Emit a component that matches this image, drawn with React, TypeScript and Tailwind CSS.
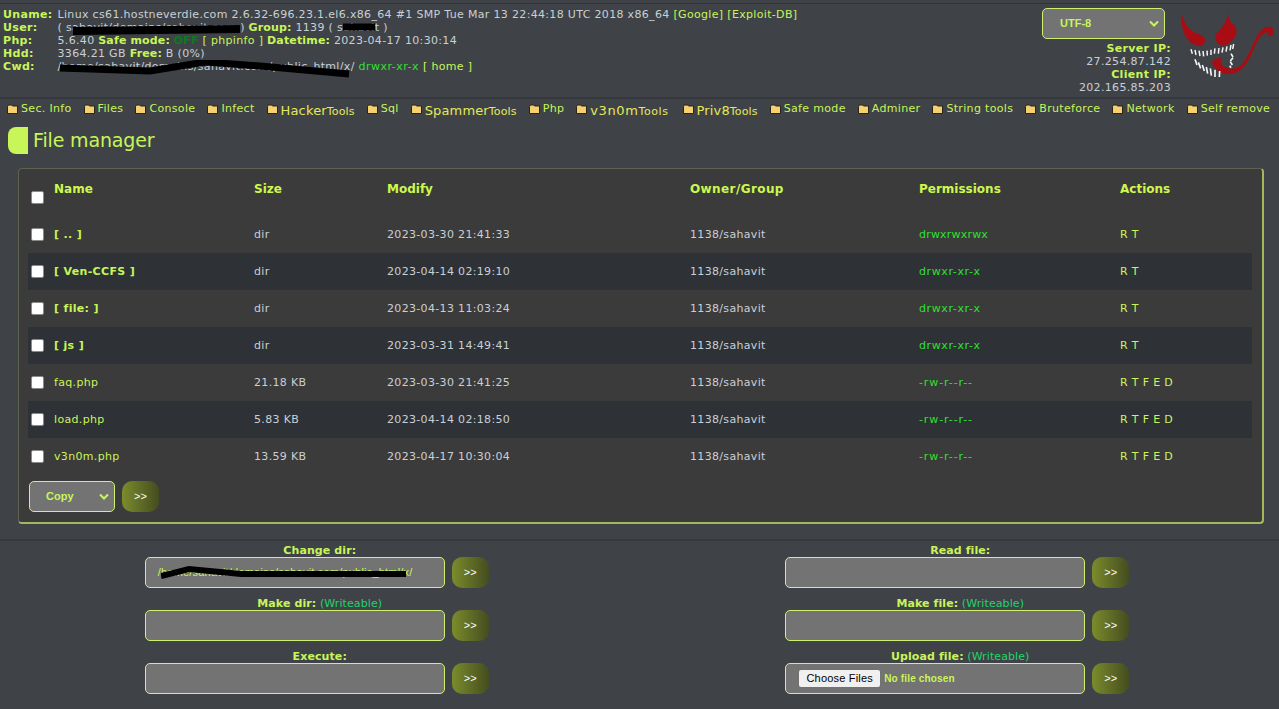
import React from "react";

const font = { fontFamily: '"DejaVu Sans", Verdana, sans-serif' };
const arial = { fontFamily: '"Liberation Sans", Arial, sans-serif' };
const LIME = "text-[#c8f558]";

function Folder() {
  return (
    <svg width="11" height="10" viewBox="0 0 11 10" className="shrink-0 mr-[3px] mt-[2px]">
      <path d="M0.5 2.5 L1.5 1 H4.5 L5.5 2 H10.5 V9.5 H0.5 Z" fill="#f6cf6f" stroke="#2b2418" strokeWidth="1" />
    </svg>
  );
}

function Nav({ t, big, small, wide }: { t?: string; big?: string; small?: string; wide?: boolean }) {
  return (
    <a className="flex items-start whitespace-nowrap text-[#c8f558]">
      <Folder />
      {t ? (
        <span className="text-[11px] leading-[14px]">{t}</span>
      ) : (
        <span className={`text-[13px] leading-[16px] text-[#e5e85a] mt-[1px] ${wide ? "tracking-[0.6px] mr-[2px]" : "tracking-[0.15px]"}`}>
          {big}
          <span className="text-[11px]">{small}</span>
        </span>
      )}
    </a>
  );
}

function Scribble({ className, d, w, h, sw = 6 }: { className: string; d: string; w: number; h: number; sw?: number }) {
  return (
    <svg className={`absolute ${className}`} width={w} height={h} viewBox={`0 0 ${w} ${h}`} fill="none">
      <path d={d} stroke="#000" strokeWidth={sw} />
    </svg>
  );
}

function Go() {
  return (
    <button className="w-[37px] h-[31px] rounded-[10px] bg-gradient-to-r from-[#7b8c2b] to-[#454d1f] text-white text-[11px] leading-none shrink-0 tracking-normal" style={arial}>
      &gt;&gt;
    </button>
  );
}

function Field({ label, w, children }: { label: string; w?: boolean; children?: React.ReactNode }) {
  return (
    <div className="flex flex-col items-center">
      <div className="text-[11px] leading-[13px] font-bold text-[#c8f558] h-[13px] whitespace-nowrap tracking-[0.1px]">
        {label}
        {w && <span className="font-normal text-[#22d468]"> (Writeable)</span>}
      </div>
      <div className="flex items-center gap-[7px] -ml-[6px] relative">
        <div className="relative w-[300px] h-[31px] rounded-[5px] border border-[#d0f070] bg-[#737373] flex items-center text-[#c8f558] overflow-visible">
          {children}
        </div>
        <Go />
      </div>
    </div>
  );
}

const rows = [
  ["[ .. ]", "dir", "2023-03-30 21:41:33", "drwxrwxrwx", "R T", true],
  ["[ Ven-CCFS ]", "dir", "2023-04-14 02:19:10", "drwxr-xr-x", "R T", true],
  ["[ file: ]", "dir", "2023-04-13 11:03:24", "drwxr-xr-x", "R T", true],
  ["[ js ]", "dir", "2023-03-31 14:49:41", "drwxr-xr-x", "R T", true],
  ["faq.php", "21.18 KB", "2023-03-30 21:41:25", "-rw-r--r--", "R T F E D", false],
  ["load.php", "5.83 KB", "2023-04-14 02:18:50", "-rw-r--r--", "R T F E D", false],
  ["v3n0m.php", "13.59 KB", "2023-04-17 10:30:04", "-rw-r--r--", "R T F E D", false],
] as const;

function permTrack(p: string) {
  if (p === "drwxrwxrwx") return "tracking-[0.2px]";
  if (p === "drwxr-xr-x") return "tracking-[0.6px]";
  return "tracking-[0.9px]";
}

function Check() {
  return <span className="block w-[13px] h-[13px] bg-white border border-[#8a8a8a] rounded-[2px]" />;
}

const upperTeeth = "M48 133 L52 146 M60 135 L63 150 M72 137 L75 153 M84 138 L86 154 M96 137 L97 152 M108 134 L108 150 M120 130 L118 146 M132 129 L130 146 M144 127 L141 143 M156 124 L153 140 M168 120 L165 136 M176 117 L173 132";
const lowerTeeth = "M60 163 L66 180 M70 172 L77 190 M82 180 L88 198 M94 186 L98 206 M106 190 L109 212 M120 194 L120 216 M134 198 L133 216 M168 146 L174 156 M174 158 L166 168 M166 170 L172 180 M164 182 L168 188";

function Logo() {
  return (
    <svg width="104" height="80" viewBox="0 0 312 240">
      <path d="M20 25 C28 55 38 72 62 84 C78 90 88 92 90 104 C91 116 82 124 68 122 C40 116 15 85 20 25 Z" fill="#a80d14" />
      <path d="M158 22 C158 48 140 70 126 84 C118 94 120 112 136 122 C152 124 170 112 182 92 C188 78 184 64 170 54 C163 46 160 36 158 22 Z" fill="#a80d14" />
      <path d="M110 170 C118 196 140 210 172 206 C204 200 222 168 238 128 C248 100 262 82 282 80 C276 84 278 92 284 94 C294 92 300 78 292 68 C280 58 258 70 246 92 C232 118 220 160 196 182 C178 196 154 194 138 176 C136 168 138 162 142 158 C130 158 118 162 110 170 Z" fill="#a80d14" />
      <path d={upperTeeth} stroke="#f4f4f4" strokeWidth="4.5" fill="none" />
      <path d={lowerTeeth} stroke="#f4f4f4" strokeWidth="5" fill="none" />
    </svg>
  );
}

export default function App() {
  return (
    <div className="w-[1279px] h-[709px] overflow-hidden bg-[#3f4348] text-[#c8d0d6] text-[11px] tracking-[0.33px]" style={font}>
      <header className="relative h-[94px] mt-[3px] border-t border-[#2f3236] flex justify-between">
        <div className="relative pt-[4px] pl-[3px] leading-[13px] flex gap-[5px]">
          <div className="font-bold text-[#c8f558]">
            <div>Uname:</div><div>User:</div><div>Php:</div><div>Hdd:</div><div>Cwd:</div>
          </div>
          <div className="relative whitespace-nowrap">
            <div>
              Linux cs61.hostneverdie.com 2.6.32-696.23.1.el6.x86_64 #1 SMP Tue Mar 13 22:44:18 UTC 2018 x86_64{" "}
              <span className={LIME}>[Google]</span> <span className={LIME}>[Exploit-DB]</span>
            </div>
            <div>
              ( sahavit/domains/sahavit.com ){" "}
              <b className="text-[#c8f558] tracking-[0.15px]">Group:</b> 1139 ( sahavit )
            </div>
            <div>
              5.6.40 <b className="text-[#c8f558] tracking-[0.15px]">Safe mode:</b> <b className="text-[#0a7a1e] tracking-[0.15px]">OFF</b>{" "}
              <span className={LIME}>[ phpinfo ]</span> <b className="text-[#c8f558] tracking-[0.15px]">Datetime:</b> 2023-04-17 10:30:14
            </div>
            <div>
              3364.21 GB <b className="text-[#c8f558] tracking-[0.15px]">Free:</b> B (0%)
            </div>
            <div>
              /home/sahavit/domains/sahavit.com/public_html/x/ <span className="text-[#2fe02f] tracking-[0.5px]">drwxr-xr-x</span>{" "}
              <span className={LIME}>[ home ]</span>
            </div>
            <Scribble className="left-[15px] top-[16px]" w={170} h={12} d="M0 7 L167 5" sw={8} />
            <Scribble className="left-[285px] top-[14px]" w={34} h={10} d="M0 5 L32 5" sw={7} />
            <Scribble className="left-[2px] top-[52px]" w={292} h={26} d="M0 8 L90 11 L145 2 L200 6 L289 14" sw={7} />
          </div>
        </div>
        <div className="flex">
          <div className="flex flex-col items-end pt-[4px] mr-[4px]">
            <div className="w-[123px] h-[31px] mr-[6px] rounded-[5px] border border-[#d0f070] bg-[#737373] flex items-center justify-between pl-[17px] pr-[5px] mb-[1px] text-[#c8f558] tracking-normal" style={arial}>
              <span className="text-[11px] font-bold">UTF-8</span>
              <svg width="10" height="7" viewBox="0 0 10 7" fill="none"><path d="M1 1.5 L5 5.5 L9 1.5" stroke="#c8f558" strokeWidth="2" /></svg>
            </div>
            <div className="text-right leading-[13px] pt-[2px] whitespace-nowrap">
              <div className="font-bold text-[#c8f558]">Server IP:</div>
              <div>27.254.87.142</div>
              <div className="font-bold text-[#c8f558]">Client IP:</div>
              <div>202.165.85.203</div>
            </div>
          </div>
          <div className="pt-[1px]"><Logo /></div>
        </div>
      </header>

      <nav className="h-[29px] border-t-2 border-[#35383c] flex gap-[12px] pl-[7px] pt-[3px] whitespace-nowrap">
        <Nav t="Sec. Info" /><Nav t="Files" /><Nav t="Console" /><Nav t="Infect" />
        <Nav big="Hacker" small="Tools" /><Nav t="Sql" /><Nav big="Spammer" small="Tools" /><Nav t="Php" />
        <Nav big="v3n0m" small="Tools" wide /><Nav big="Priv8" small="Tools" /><Nav t="Safe mode" /><Nav t="Adminer" />
        <Nav t="String tools" /><Nav t="Bruteforce" /><Nav t="Network" /><Nav t="Self remove" />
      </nav>

      <div className="flex items-center h-[28px] pl-[8px]">
        <span className="w-[20px] h-[27px] rounded-l-[8px] bg-[#c8f558]" />
        <h1 className="ml-[5px] text-[19px] leading-[24px] text-[#c8f558] tracking-[-0.15px]">File manager</h1>
      </div>

      <section className="ml-[18px] mt-[14px] w-[1246px] h-[356px] rounded-[4px] bg-[#3b3b3b] border-t border-t-[#5c6150] border-b-2 border-b-[#a2b85a] border-r-2 border-r-[#a2b85a] border-l border-l-[#5c6150] px-[9px] pt-[11px]">
        <table className="w-[1224px] table-fixed border-collapse">
          <colgroup>
            <col className="w-[26px]" />
            <col className="w-[200px]" />
            <col className="w-[133px]" />
            <col className="w-[303px]" />
            <col className="w-[229px]" />
            <col className="w-[201px]" />
            <col />
          </colgroup>
          <thead>
            <tr className="h-[36px] text-[#cdf84c] text-left align-top tracking-normal">
              <th className="pl-[3px] pt-[11px] font-normal"><Check /></th>
              <th className="pt-[1px] font-bold text-[12px] leading-[16px]">Name</th>
              <th className="pt-[1px] font-bold text-[12px] leading-[16px]">Size</th>
              <th className="pt-[1px] font-bold text-[12px] leading-[16px]">Modify</th>
              <th className="pt-[1px] font-bold text-[12px] leading-[16px] tracking-[0.4px]">Owner/Group</th>
              <th className="pt-[1px] font-bold text-[12px] leading-[16px]">Permissions</th>
              <th className="pt-[1px] font-bold text-[12px] leading-[16px]">Actions</th>
            </tr>
          </thead>
          <tbody>
            {rows.map((r, i) => (
              <tr key={r[0]} className={`h-[37px] ${i % 2 === 1 ? "bg-[#2e3236]" : ""}`}>
                <td className="pl-[3px]"><Check /></td>
                <td className={`pt-[2px] ${r[5] ? "font-bold text-[#c8f558]" : "text-[#c8f558]"}`}>{r[0]}</td>
                <td className="pt-[2px]">{r[1]}</td>
                <td className="pt-[2px]">{r[2]}</td>
                <td className="pt-[2px]">1138/sahavit</td>
                <td className={`pt-[2px] text-[#2fe02f] ${permTrack(r[3])}`}>{r[3]}</td>
                <td className="pt-[2px] text-[#c8f558]">{r[4]}</td>
              </tr>
            ))}
          </tbody>
        </table>
        <div className="flex items-center gap-[7px] ml-[1px] mt-[6px]">
          <div className="w-[86px] h-[31px] rounded-[5px] border border-[#d0f070] bg-[#737373] flex items-center justify-between pl-[16px] pr-[5px] text-[#c8f558] tracking-normal" style={arial}>
            <span className="font-bold">Copy</span>
            <svg width="10" height="7" viewBox="0 0 10 7" fill="none"><path d="M1 1.5 L5 5.5 L9 1.5" stroke="#c8f558" strokeWidth="2" /></svg>
          </div>
          <Go />
        </div>
      </section>

      <div className="mt-[15px] border-t-2 border-[#35383c] grid grid-cols-2 pt-[3px]">
        <div className="flex flex-col gap-[9px]">
          <Field label="Change dir:">
            <span className="ml-[12px] text-[11px] whitespace-nowrap tracking-[0.2px]" style={arial}>/home/sahavit/domains/sahavit.com/public_html/x/</span>
            <Scribble className="left-[15px] top-[6px]" w={262} h={18} d="M0 12 L28 5 L80 10 L245 10" sw={6} />
          </Field>
          <Field label="Make dir:" w />
          <Field label="Execute:" />
        </div>
        <div className="flex flex-col gap-[9px] pl-[2px]">
          <Field label="Read file:" />
          <Field label="Make file:" w />
          <Field label="Upload file:" w>
            <span className="ml-[13px] h-[17px] w-[81px] bg-[#f0f0f0] rounded-[2px] text-black text-[11px] flex items-center justify-center tracking-[0.2px]" style={arial}>Choose Files</span>
            <span className="ml-[4px] font-bold text-[10px] tracking-[0.15px]" style={arial}>No file chosen</span>
          </Field>
        </div>
      </div>
    </div>
  );
}
